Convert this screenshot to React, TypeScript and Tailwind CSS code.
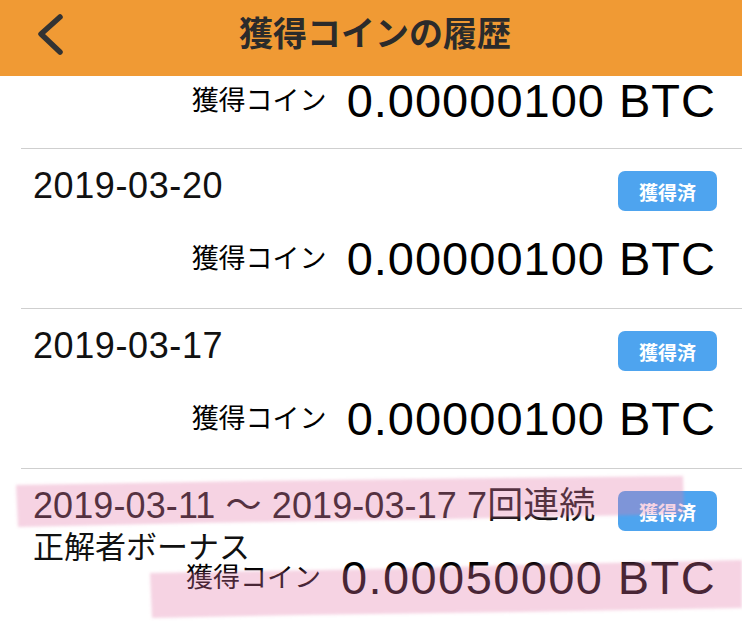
import React from "react";

interface Entry {
  id: number;
  date: string;
  subtitle?: string;
  amount: string;
}

const entries: Entry[] = [
  { id: 2, date: "2019-03-20", amount: "0.00000100" },
  { id: 3, date: "2019-03-17", amount: "0.00000100" },
  {
    id: 4,
    date: "2019-03-11 〜 2019-03-17 7回連続",
    subtitle: "正解者ボーナス",
    amount: "0.00050000",
  },
];

const latin = "font-['Liberation_Sans','Noto_Sans_CJK_JP',sans-serif]";
const jp = "font-['Noto_Sans_CJK_JP',sans-serif]";

function Amount({ value, wide }: { value: string; wide?: boolean }) {
  return (
    <div className="flex items-center justify-end">
      <span className={`${jp} text-[27px] leading-[36px] mb-[4px] text-black`}>獲得コイン</span>
      <span
        className={`${latin} ml-[20px] text-[47px] leading-[48px] text-black ${
          wide ? "tracking-[1.4px]" : "tracking-[1px]"
        }`}
      >
        {value} BTC
      </span>
    </div>
  );
}

function Badge() {
  return (
    <div className="mt-[3px] flex h-[40px] w-[99px] shrink-0 items-center justify-center rounded-[7px] bg-[#4ea4ef]">
      <span className={`${jp} text-[19px] font-bold leading-none text-white`}>獲得済</span>
    </div>
  );
}

export default function App() {
  return (
    <div className="relative h-[625px] w-[742px] overflow-hidden bg-white">
      {/* Header */}
      <div className="relative flex h-[76px] justify-center bg-[#f09a34]">
        <svg
          className="absolute left-[34px] top-[12px]"
          width="34"
          height="46"
          viewBox="0 0 34 46"
        >
          <path
            d="M26 5 L7 22 L26 40"
            fill="none"
            stroke="#333333"
            strokeWidth="5.5"
            strokeLinecap="round"
            strokeLinejoin="round"
          />
        </svg>
        <h1 className={`${jp} mt-[12px] ml-[8px] text-[34px] font-bold leading-[40px] text-[#2b2b2b]`}>
          獲得コインの履歴
        </h1>
      </div>

      {/* Partial first row (scrolled) */}
      <div className="ml-[21px] h-[73px] border-b border-[#cfcfcf] pt-[1px] pr-[26px]">
        <Amount value="0.00000100" />
      </div>

      {entries.map((e) => (
        <div key={e.id} className="ml-[21px] h-[160px] border-b border-[#cfcfcf] pl-[12px] pr-[25px] pt-[19px]">
          <div className="flex items-start justify-between">
            <span
              className={`${latin} h-[36px] text-[36px] leading-[36px] text-[#111] ${
                e.subtitle ? "tracking-[0.1px]" : "tracking-[0.6px]"
              }`}
            >
              {e.date}
            </span>
            <Badge />
          </div>
          {e.subtitle ? (
            <>
              <div className={`${jp} mt-[2px] h-[24px] text-[31px] leading-[24px] text-[#111]`}>{e.subtitle}</div>
              <div className="mt-[-3px] mr-[1px]">
                <Amount value={e.amount} wide />
              </div>
            </>
          ) : (
            <div className="mt-[24px] mr-[1px]">
              <Amount value={e.amount} />
            </div>
          )}
        </div>
      ))}

      {/* Highlighter marks drawn over the list */}
      <svg className="pointer-events-none absolute left-0 top-0" width="742" height="625">
        <defs>
          <filter id="soft" x="-5%" y="-30%" width="110%" height="160%">
            <feGaussianBlur stdDeviation="1.6" />
          </filter>
        </defs>
        <g filter="url(#soft)" fill="rgba(228,118,168,0.32)">
          <polygon points="16,485 250,481 500,478 683,476 684,514 450,519 200,523 18,527" />
          <polygon points="150,573 380,569 560,564 742,560 742,608 520,612 300,615 152,618" />
        </g>
      </svg>
    </div>
  );
}
